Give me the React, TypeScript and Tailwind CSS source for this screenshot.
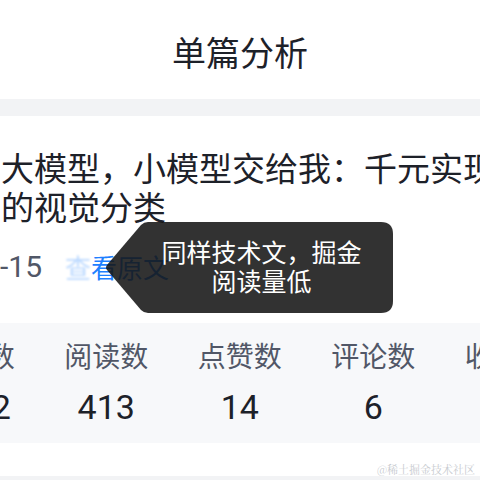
const stats = [
  { label: "展现数", value: "1162" },
  { label: "阅读数", value: "413" },
  { label: "点赞数", value: "14" },
  { label: "评论数", value: "6" },
  { label: "收藏数", value: "21" },
];

const cjk = "font-['Noto_Sans_CJK_SC','Noto_Sans',sans-serif]";

function Tooltip() {
  return (
    <div className="absolute left-[104px] top-[222px] h-[91px] w-[289px]">
      <svg width="289" height="91" viewBox="0 0 289 91" className="absolute inset-0">
        <path
          d="M44,0 H277 Q289,0 289,12 V79 Q289,91 277,91 H44 Q40,91 37,88 L3,48 Q1,45.5 3,43 L37,3 Q40,0 44,0 Z"
          fill="rgba(22,22,22,0.88)"
        />
      </svg>
      <div
        className={`relative flex h-full flex-col items-center justify-center pb-[3px] pl-[26px] text-[25px] leading-[29px] text-white ${cjk}`}
      >
        <div>同样技术文，掘金</div>
        <div>阅读量低</div>
      </div>
    </div>
  );
}

export default function App() {
  return (
    <div className={`relative h-[480px] w-[480px] overflow-hidden bg-white ${cjk}`}>
      <header className="flex h-[99px] items-center justify-center pt-[4px] text-[34px] font-normal text-[#1d2129]">
        单篇分析
      </header>
      <div className="h-[17px] bg-[#f2f3f5]" />

      <section className="pt-[32px]">
        <div className="whitespace-nowrap pl-[1px] text-[33px] leading-[39px] text-[#1d2129]">
          <div>大模型，小模型交给我：千元实现高精度</div>
          <div>的视觉分类</div>
        </div>

        <div className="mt-[25px] flex h-[30px] items-center whitespace-nowrap text-[26px]">
          <span className="font-['Roboto','Noto_Sans_CJK_SC',sans-serif] text-[30px] text-[#515767]">-15</span>
          <span className="ml-[23px] text-[#1e80ff]">
            <span className="opacity-30 blur-[1px]">查</span>看原文
          </span>
        </div>

        <div className="ml-[-94px] mt-[42px] flex h-[120px] w-[680px] bg-[#f7f8fa] pt-[18px]">
          {stats.map((s) => (
            <div key={s.label} className="flex w-[133.5px] shrink-0 flex-col items-center">
              <div className="text-[28px] leading-[28px] text-[#515767]">{s.label}</div>
              <div className="mt-[18px] font-['Roboto','Noto_Sans_CJK_SC',sans-serif] text-[34px] font-normal leading-[40px] text-[#1d2129]">
                {s.value}
              </div>
            </div>
          ))}
        </div>
      </section>

      <div className="absolute bottom-0 left-0 h-[4px] w-full bg-[#f2f3f5]" />
      <div className="absolute right-[5px] top-[462px] font-['Noto_Serif_CJK_SC','Noto_Sans_CJK_SC',serif] text-[11px] leading-[14px] text-[#c8cbd0]">
        @稀土掘金技术社区
      </div>

      <Tooltip />
    </div>
  );
}
